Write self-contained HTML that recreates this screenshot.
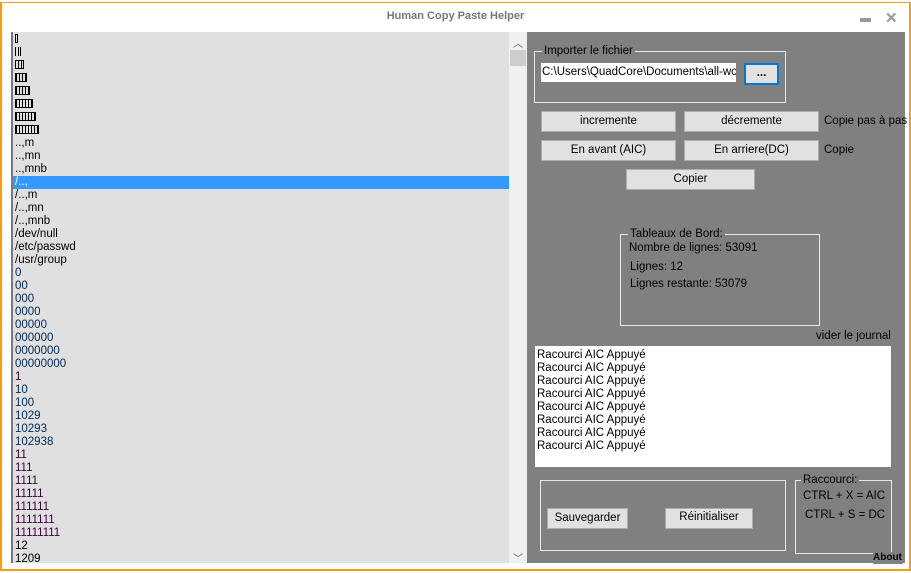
<!DOCTYPE html><html><head><meta charset="utf-8"><style>
*{margin:0;padding:0;box-sizing:border-box}
body{width:911px;height:573px;background:#fff;position:relative;overflow:hidden;font-family:"Liberation Sans",Arial,sans-serif;font-size:11.5px;color:#000}
.a{position:absolute}
.frame{left:0;top:2px;width:911px;height:569px;border:2px solid #f39c1f;border-top-width:1px}
.title{left:0;top:10px;width:911px;text-align:center;font-weight:bold;font-size:11px;color:#777}
.list{left:11px;top:32px;width:498px;height:531px;background:#e0e0e0;border-left:2px solid #7a7a7a;padding-top:1px}
.list div{height:13px;line-height:13px;padding-left:2px;white-space:nowrap}
.sel{background:#3399ff;color:#fff}
.b{display:inline-block;width:16px;height:9px;vertical-align:-1px}
.sb{left:509px;top:32px;width:18px;height:531px;background:#f0f0f0}
.panel{left:527px;top:32px;width:378px;height:531px;background:#808080}
.gb{border:1px solid #e8e8e8}
.gl{position:absolute;top:-8px;left:7px;background:#808080;padding:0 2px;line-height:14px}
.btn{background:#e1e1e1;border:1px solid #adadad;text-align:center;line-height:18px}
</style></head><body>
<div class="a frame"></div>
<div class="a title">Human Copy Paste Helper</div>
<div class="a" style="left:860px;top:18px;width:11px;height:4px;background:#999"></div>
<div class="a" style="left:885px;top:9px;font-size:15px;font-weight:bold;color:#999">✕</div>
<div class="a list">
<div><span class="b" style="width:3px;border:1px solid #000"></span></div>
<div><span class="b" style="width:6px;background:repeating-linear-gradient(90deg,#000 0 1px,transparent 1px 3px);border-right:1px solid #000"></span></div>
<div><span class="b" style="width:9px;background:repeating-linear-gradient(90deg,#000 0 1px,transparent 1px 3px);border-right:1px solid #000;border-top:1px solid #000;border-bottom:1px solid #000"></span></div>
<div><span class="b" style="width:12px;background:repeating-linear-gradient(90deg,#000 0 1px,transparent 1px 3px);border:1px solid #000"></span></div>
<div><span class="b" style="width:15px;background:repeating-linear-gradient(90deg,#000 0 1px,transparent 1px 3px);border:1px solid #000"></span></div>
<div><span class="b" style="width:18px;background:repeating-linear-gradient(90deg,#000 0 1px,transparent 1px 3px);border:1px solid #000"></span></div>
<div><span class="b" style="width:21px;background:repeating-linear-gradient(90deg,#000 0 1px,transparent 1px 3px);border:1px solid #000"></span></div>
<div><span class="b" style="width:24px;background:repeating-linear-gradient(90deg,#000 0 1px,transparent 1px 3px);border:1px solid #000"></span></div>
<div>..,m</div><div>..,mn</div><div>..,mnb</div>
<div class="sel">/..,</div><div>/..,m</div><div>/..,mn</div><div>/..,mnb</div>
<div>/dev/null</div><div>/etc/passwd</div><div>/usr/group</div>
<div style="color:#002a55">0</div><div style="color:#002a55">00</div><div style="color:#002a55">000</div><div style="color:#002a55">0000</div><div style="color:#002a55">00000</div><div style="color:#002a55">000000</div><div style="color:#002a55">0000000</div><div style="color:#002a55">00000000</div>
<div style="color:#2a0030">1</div><div style="color:#002a55">10</div><div style="color:#002a55">100</div><div style="color:#002a55">1029</div><div style="color:#002a55">10293</div><div style="color:#002a55">102938</div>
<div style="color:#3a0040">11</div><div style="color:#3a0040">111</div><div style="color:#3a0040">1111</div><div style="color:#3a0040">11111</div><div style="color:#3a0040">111111</div><div style="color:#3a0040">1111111</div><div style="color:#3a0040">11111111</div>
<div>12</div><div>1209</div>
</div>
<div class="a sb"></div>
<div class="a" style="left:513px;top:35px;font-size:10px;color:#555">︿</div>
<div class="a" style="left:510px;top:50px;width:16px;height:16px;background:#cdcdcd"></div>
<div class="a" style="left:513px;top:550px;font-size:10px;color:#555">﹀</div>
<div class="a panel"></div>
<div class="a gb" style="left:534px;top:51px;width:252px;height:52px"><span class="gl">Importer le fichier</span></div>
<div class="a" style="left:541px;top:63px;width:195px;height:19px;background:#fff;line-height:19px;padding-left:1px;overflow:hidden;white-space:nowrap">C:\Users\QuadCore\Documents\all-words</div>
<div class="a btn" style="left:744px;top:63px;width:35px;height:22px;border:2px solid #0078d7;font-weight:bold;line-height:16px">...</div>
<div class="a btn" style="left:541px;top:111px;width:135px;height:21px">incremente</div>
<div class="a btn" style="left:684px;top:111px;width:135px;height:21px">décremente</div>
<div class="a" style="left:824px;top:115px">Copie pas à pas</div>
<div class="a btn" style="left:541px;top:140px;width:135px;height:21px">En avant (AIC)</div>
<div class="a btn" style="left:684px;top:140px;width:135px;height:21px">En arriere(DC)</div>
<div class="a" style="left:824px;top:144px">Copie</div>
<div class="a btn" style="left:626px;top:169px;width:129px;height:21px">Copier</div>
<div class="a gb" style="left:620px;top:234px;width:200px;height:92px"><span class="gl">Tableaux de Bord:</span>
<div class="a" style="left:8px;top:7px">Nombre de lignes: 53091</div>
<div class="a" style="left:9px;top:26px">Lignes: 12</div>
<div class="a" style="left:9px;top:43px">Lignes restante: 53079</div></div>
<div class="a" style="left:816px;top:330px">vider le journal</div>
<div class="a" style="left:535px;top:346px;width:356px;height:121px;background:#fff;padding:3px 2px;line-height:13px">Racourci AIC Appuyé<br>Racourci AIC Appuyé<br>Racourci AIC Appuyé<br>Racourci AIC Appuyé<br>Racourci AIC Appuyé<br>Racourci AIC Appuyé<br>Racourci AIC Appuyé<br>Racourci AIC Appuyé</div>
<div class="a gb" style="left:540px;top:480px;width:246px;height:71px"></div>
<div class="a btn" style="left:547px;top:508px;width:81px;height:21px">Sauvegarder</div>
<div class="a btn" style="left:665px;top:508px;width:88px;height:21px;line-height:17px">Réinitialiser</div>
<div class="a gb" style="left:795px;top:480px;width:97px;height:74px"><span class="gl" style="left:5px">Raccourci:</span>
<div class="a" style="left:7px;top:9px">CTRL + X = AIC</div>
<div class="a" style="left:9px;top:28px">CTRL + S = DC</div></div>
<div class="a" style="left:873px;top:552px;width:30px;height:12px;background:#808080;font-weight:bold;font-size:10px;line-height:12px">About</div>
</body></html>
